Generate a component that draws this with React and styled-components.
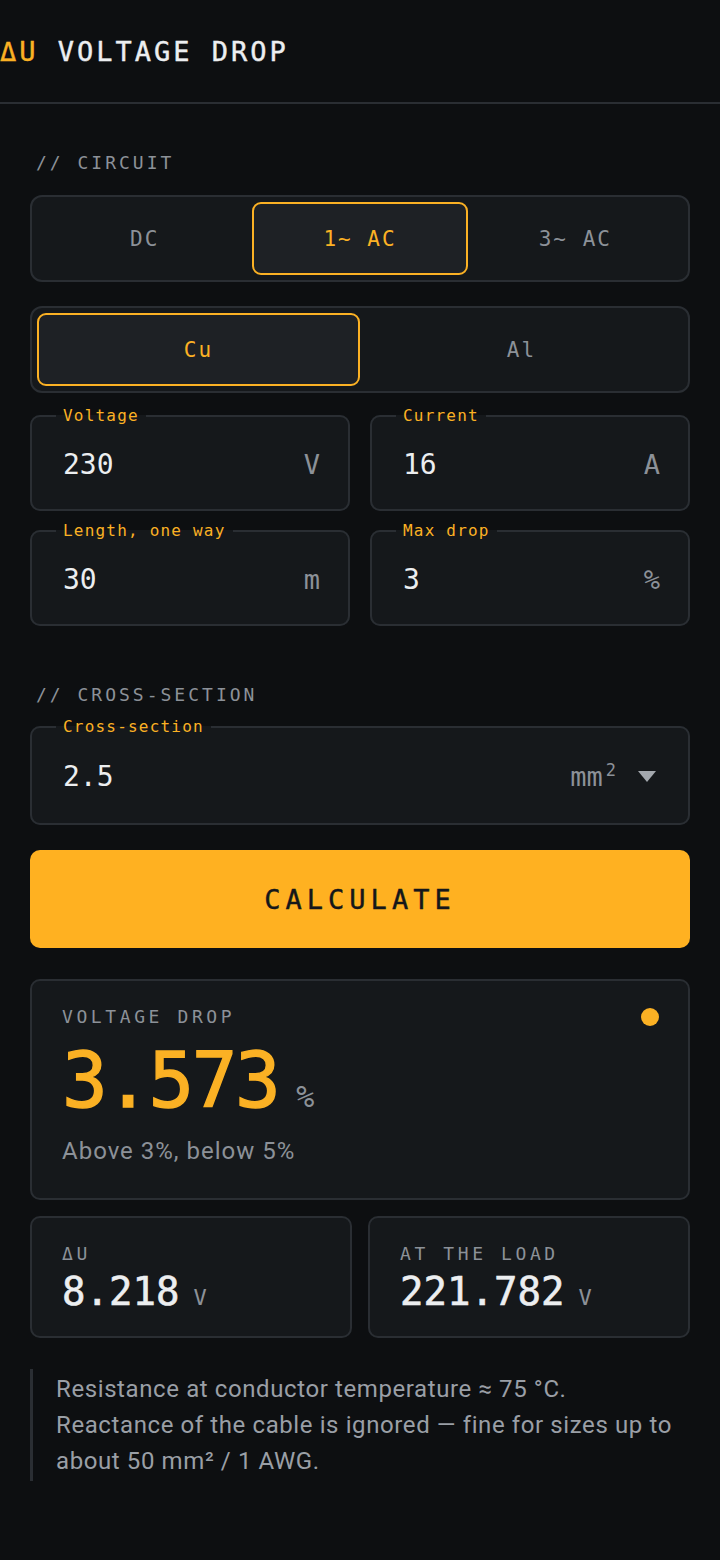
import React, { useState } from "react";
import styled, { createGlobalStyle } from "styled-components";

const mono = `"DejaVu Sans Mono", "Liberation Mono", monospace`;
const sans = `Roboto, "Noto Sans", sans-serif`;

const amber = "#fbb124";
const line = "#2a2e33";
const panel = "#15181b";
const muted = "#8c9198";

const Global = createGlobalStyle`
  html, body {
    margin: 0;
    background: #0d0f11;
  }
  body {
    font-family: ${mono};
    color: #e8eaed;
  }
  * { box-sizing: border-box; }
`;

export default function App() {
  const [circuit, setCircuit] = useState("1~ AC");
  const [metal, setMetal] = useState("Cu");

  return (
    <Page>
      <Global />
      <Header>
        <Title>
          <Accent>ΔU</Accent> VOLTAGE DROP
        </Title>
      </Header>

      <Main>
        <SectionLabel>// CIRCUIT</SectionLabel>
        <Segmented $cols={3}>
          {["DC", "1~ AC", "3~ AC"].map((c) => (
            <SegButton key={c} $active={circuit === c} onClick={() => setCircuit(c)}>
              {c}
            </SegButton>
          ))}
        </Segmented>
        <Segmented $cols={2} $top={24}>
          {["Cu", "Al"].map((m) => (
            <SegButton key={m} $active={metal === m} onClick={() => setMetal(m)}>
              {m}
            </SegButton>
          ))}
        </Segmented>

        <FieldGrid>
          <Field label="Voltage" value="230" unit="V" />
          <Field label="Current" value="16" unit="A" />
          <Field label="Length, one way" value="30" unit="m" />
          <Field label="Max drop" value="3" unit="%" />
        </FieldGrid>

        <SectionLabel $top={58}>// CROSS-SECTION</SectionLabel>
        <SelectBox>
          <Legend>Cross-section</Legend>
          <FieldRow $tall>
            <Value defaultValue="2.5" />
            <Unit>
              mm<Sup>2</Sup>
            </Unit>
            <Caret viewBox="0 0 18 11">
              <path d="M0 0h18L9 11z" fill="#a3a8ae" />
            </Caret>
          </FieldRow>
        </SelectBox>

        <Calculate>CALCULATE</Calculate>

        <ResultCard>
          <ResultHead>
            <CardLabel>VOLTAGE DROP</CardLabel>
            <Dot />
          </ResultHead>
          <BigValue>
            3.573<BigUnit>%</BigUnit>
          </BigValue>
          <Verdict>Above 3%, below 5%</Verdict>
        </ResultCard>

        <StatGrid>
          <StatCard>
            <CardLabel>ΔU</CardLabel>
            <StatValue>
              8.218<StatUnit>V</StatUnit>
            </StatValue>
          </StatCard>
          <StatCard>
            <CardLabel>AT THE LOAD</CardLabel>
            <StatValue>
              221.782<StatUnit>V</StatUnit>
            </StatValue>
          </StatCard>
        </StatGrid>

        <Note>
          Resistance at conductor temperature ≈ 75 °C.
          <br />
          Reactance of the cable is ignored — fine for sizes up to about 50 mm² / 1 AWG.
        </Note>
      </Main>
    </Page>
  );
}

function Field({ label, value, unit }) {
  return (
    <FieldSet>
      <Legend>{label}</Legend>
      <FieldRow>
        <Value defaultValue={value} />
        <Unit>{unit}</Unit>
      </FieldRow>
    </FieldSet>
  );
}

const Page = styled.div`
  width: 720px;
  min-height: 1560px;
  background: #0d0f11;
`;

const Header = styled.header`
  height: 104px;
  display: flex;
  align-items: center;
  border-bottom: 2px solid ${line};
`;

const Title = styled.h1`
  margin: 0;
  font-family: ${mono};
  font-weight: 400;
  font-size: 27px;
  letter-spacing: 3px;
  color: #eceef0;
  -webkit-text-stroke: 0.4px currentColor;
`;

const Accent = styled.span`
  color: ${amber};
`;

const Main = styled.main`
  padding: 48px 30px 60px;
  display: flex;
  flex-direction: column;
`;

const SectionLabel = styled.div`
  margin-top: ${(p) => p.$top || 0}px;
  padding-left: 6px;
  font-size: 18px;
  line-height: 22px;
  letter-spacing: 3px;
  color: ${muted};
`;

const Segmented = styled.div`
  margin-top: ${(p) => p.$top || 21}px;
  display: grid;
  grid-template-columns: repeat(${(p) => p.$cols}, 1fr);
  height: 87px;
  padding: 5px;
  background: ${panel};
  border: 2px solid ${line};
  border-radius: 12px;
`;

const SegButton = styled.button`
  font-family: ${mono};
  font-size: 21px;
  letter-spacing: 2px;
  background: ${(p) => (p.$active ? "#1e2125" : "transparent")};
  color: ${(p) => (p.$active ? amber : muted)};
  border: 2px solid ${(p) => (p.$active ? amber : "transparent")};
  border-radius: 9px;
  cursor: pointer;
`;

const FieldGrid = styled.div`
  margin-top: 13px;
  display: grid;
  grid-template-columns: 1fr 1fr;
  column-gap: 20px;
  row-gap: 10px;
`;

const FieldSet = styled.fieldset`
  margin: 0;
  min-width: 0;
  padding: 0 28px 0 31px;
  background: ${panel};
  border: 2px solid ${line};
  border-radius: 10px;
`;

const SelectBox = styled(FieldSet)`
  margin-top: 11px;
  padding-right: 32px;
`;

const Legend = styled.legend`
  margin-left: -7px;
  padding: 0 7px;
  font-size: 16px;
  line-height: 20px;
  letter-spacing: 1.2px;
  color: ${amber};
`;

const FieldRow = styled.div`
  display: flex;
  align-items: center;
  gap: 20px;
  height: ${(p) => (p.$tall ? 86 : 83)}px;
  padding-bottom: ${(p) => (p.$tall ? 8 : 6)}px;
`;

const Value = styled.input`
  flex: 1;
  min-width: 0;
  padding: 0;
  border: none;
  outline: none;
  background: transparent;
  font-family: ${mono};
  font-size: 28px;
  color: #eceef0;
`;

const Unit = styled.span`
  font-size: 27px;
  color: ${muted};
`;

const Sup = styled.sup`
  font-size: 17px;
  margin-left: 3px;
  vertical-align: 10px;
  line-height: 0;
`;

const Caret = styled.svg`
  width: 18px;
  height: 11px;
  margin-left: 2px;
`;

const Calculate = styled.button`
  margin-top: 25px;
  height: 98px;
  border: none;
  border-radius: 10px;
  background: #ffb121;
  color: #15171a;
  font-family: ${mono};
  font-size: 27px;
  letter-spacing: 5px;
  -webkit-text-stroke: 0.4px currentColor;
  cursor: pointer;
`;

const Card = styled.section`
  background: ${panel};
  border: 2px solid ${line};
  border-radius: 10px;
`;

const ResultCard = styled(Card)`
  margin-top: 31px;
  height: 221px;
  padding: 25px 30px 0;
`;

const ResultHead = styled.div`
  display: flex;
  align-items: center;
  justify-content: space-between;
`;

const CardLabel = styled.div`
  font-size: 18px;
  line-height: 22px;
  letter-spacing: 3.6px;
  color: ${muted};
`;

const Dot = styled.span`
  width: 18px;
  height: 18px;
  margin-right: -1px;
  border-radius: 50%;
  background: ${amber};
`;

const BigValue = styled.div`
  margin-top: 15px;
  font-size: 76px;
  line-height: 76px;
  letter-spacing: -2.5px;
  color: ${amber};
  -webkit-text-stroke: 1.4px currentColor;
`;

const BigUnit = styled.span`
  margin-left: 18px;
  font-size: 30px;
  line-height: 1;
  letter-spacing: 0;
  color: ${muted};
  -webkit-text-stroke: 0;
`;

const Verdict = styled.div`
  margin-top: 17px;
  font-family: ${sans};
  font-size: 24px;
  line-height: 30px;
  letter-spacing: 1px;
  color: ${muted};
`;

const StatGrid = styled.div`
  margin-top: 16px;
  display: grid;
  grid-template-columns: 1fr 1fr;
  gap: 16px;
`;

const StatCard = styled(Card)`
  height: 122px;
  padding: 25px 30px 0;
`;

const StatValue = styled.div`
  margin-top: 4px;
  font-size: 39px;
  line-height: 46px;
  color: #eceef0;
  -webkit-text-stroke: 0.6px currentColor;
`;

const StatUnit = styled.span`
  margin-left: 14px;
  font-size: 22px;
  line-height: 1;
  color: ${muted};
  -webkit-text-stroke: 0;
`;

const Note = styled.p`
  margin: 31px 0 0;
  padding: 2px 0 2px 23px;
  border-left: 3px solid ${line};
  font-family: ${sans};
  font-size: 24px;
  line-height: 36px;
  letter-spacing: 0.6px;
  color: #9a9fa6;
`;
